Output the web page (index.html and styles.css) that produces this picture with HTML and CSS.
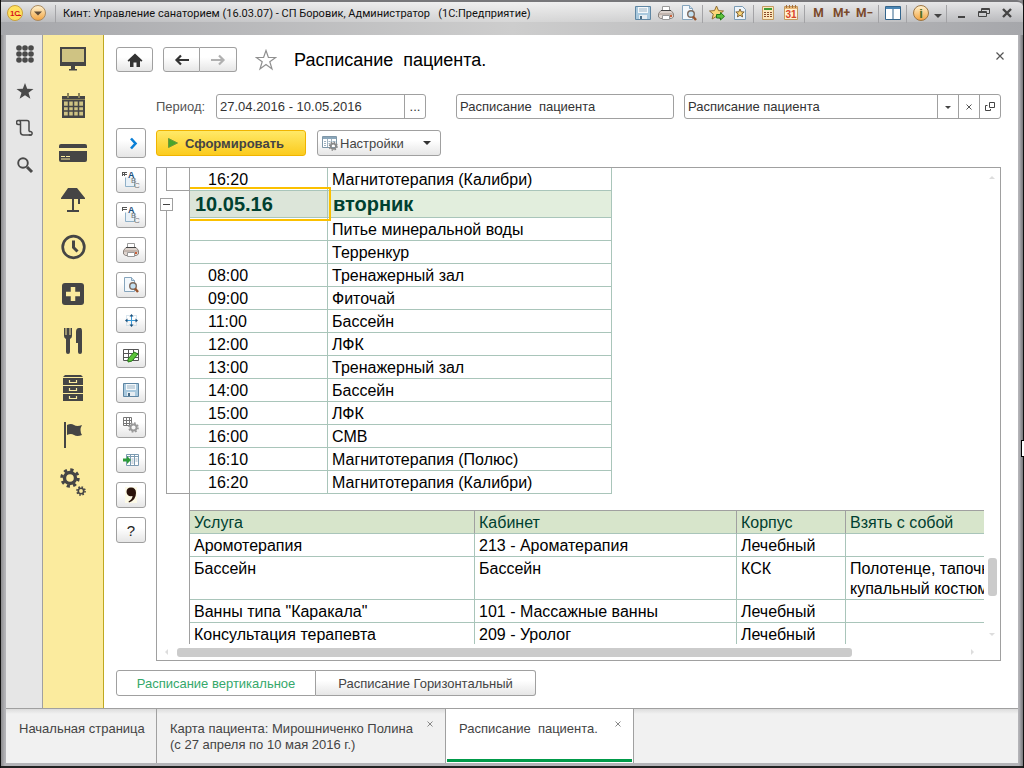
FILE: index.html
```html
<!DOCTYPE html>
<html lang="ru">
<head>
    <meta charset="UTF-8">
    <meta name="viewport" content="width=device-width, initial-scale=1.0">
    <title>Кинт: Управление санаторием</title>
    <link rel="stylesheet" href="styles.css">
</head>
<body>
    <!-- Общие значки -->
    <svg class="sprite" width="0" height="0" aria-hidden="true">
        <defs>
            <linearGradient id="orange" x1="0" y1="0" x2="0" y2="1">
                <stop offset="0" stop-color="#fff3d0"/>
                <stop offset="1" stop-color="#f2a340"/>
            </linearGradient>
            <symbol id="save" viewBox="0 0 16 16">
                <path d="M.5 1.5h15v13h-15z" fill="#a9c9de" stroke="#5f86a3"/>
                <path d="M3 2h10v6H3z" fill="#f4f8fb"/>
                <path d="M4 4h8M4 6h8" stroke="#9db4c4"/>
                <path d="M4 10h8v4H4z" fill="#e6edf2"/>
                <path d="M5 11h2v3H5z" fill="#4a6d86"/>
            </symbol>
            <symbol id="print" viewBox="0 0 16 16">
                <path d="M4.500 1.500h7v5h-7z" fill="#fff" stroke="#9a9a9a"/>
                <path d="M3 5.500h10l2.500 3v3.500l-2 1.500h-11l-2-1.500V8.500z" fill="#ddd3cd" stroke="#8b8480"/>
                <path d="M1 9h14" stroke="#a8988f"/>
                <path d="M4.500 10.500h7v4h-7z" fill="#fff" stroke="#999"/>
                <path d="M12 10h2v2h-2z" fill="#c9613a"/>
                <path d="M3 5.500h10" stroke="#444"/>
            </symbol>
            <symbol id="preview" viewBox="0 0 16 16">
                <path d="M1.500.500h7l3 3v11h-10z" fill="#f3f8fc" stroke="#86a5bd"/>
                <path d="M8.500.500v3h3" fill="#cfe0ec" stroke="#86a5bd"/>
                <circle cx="10" cy="9" r="3.300" fill="#c3e0f2" stroke="#7d6a5e" stroke-width="1.400"/>
                <path d="M12 11.500l3 3.500" stroke="#96532c" stroke-width="2.400"/>
            </symbol>
            <symbol id="gear" viewBox="0 0 20 20">
                <circle cx="10" cy="10" r="5.500" fill="none" stroke="currentColor" stroke-width="3.400"/>
                <circle cx="10" cy="10" r="8.200" fill="none" stroke="currentColor" stroke-width="3" stroke-dasharray="3.220 3.220"/>
            </symbol>
            <symbol id="abc" viewBox="0 0 18 18">
                <path d="M3.500 6.500v9h9v-8l-2-2" fill="#e8f1f8" stroke="#8fb0c8"/>
                <text x="6" y="7" class="abc-a">A</text>
                <text x="9" y="12" class="abc-b">B</text>
                <text x="12" y="17" class="abc-b">C</text>
            </symbol>
            <symbol id="tabgear" viewBox="0 0 16 16">
                <path d="M.500 1.500h14v11H.500z" fill="#fff" stroke="#7f97a8"/>
                <path d="M1 2h13v2H1z" fill="#8ba7bb"/>
                <path d="M5.500 4v8M9.500 4v8M2 6.500h2M2 8.500h2M2 10.500h2M6.500 6.500h2M6.500 8.500h2M10.500 6.500h3" stroke="#9fb2c0"/>
                <use href="#gear" x="6.500" y="6.500" width="9.500" height="9.500" color="#8a8a8a"/>
            </symbol>
        </defs>
    </svg>

    <div class="window">
        <!-- Заголовок окна -->
        <header class="titlebar">
            <svg class="orb" viewBox="0 0 16 16"><circle cx="8" cy="8" r="7.500" fill="#ffe05e" stroke="#c9a03c"/><text x="8" y="11" text-anchor="middle" class="logo">1С</text><path d="M9 10.500h5" stroke="#d8141c"/></svg>
            <button class="orb-btn" aria-label="Меню"><svg class="orb" viewBox="0 0 16 16"><circle cx="8" cy="8" r="7.500" fill="url(#orange)" stroke="#a98a62"/><path d="M4 6.500h8L8 10.500z" fill="#5c4a37"/></svg></button>
            <span class="sep"></span>
            <h1 class="app-title">Кинт: Управление санаторием (16.03.07) - СП Боровик, Администратор   (1С:Предприятие)</h1>
            <div class="title-tools">
                <button aria-label="Сохранить"><svg class="i16"><use href="#save"/></svg></button>
                <button aria-label="Печать"><svg class="i16"><use href="#print"/></svg></button>
                <button aria-label="Просмотр"><svg class="i16"><use href="#preview"/></svg></button>
                <span class="sep"></span>
                <button aria-label="В избранное"><svg class="i16" viewBox="0 0 16 16"><path d="M7.500 1l2 4.600 5 .4-3.800 3.200 1.200 4.800-4.400-2.600L3.100 14l1.200-4.800L.500 6l5-.4z" fill="#fbd678" stroke="#8f6d35"/><path d="M7.500 9.500h4v-2l4 3.800-4 3.700v-2h-4z" fill="#5cc23c" stroke="#247a18"/></svg></button>
                <button aria-label="Избранное"><svg class="i16" viewBox="0 0 16 16"><path d="M2.500 1.500h8l3 3v10h-11z" fill="#edf4fa" stroke="#7b9cb5"/><path d="M8 4l1.200 2.800 3 .2-2.300 2 .7 2.900L8 10.300l-2.600 1.600.7-2.900-2.300-2 3-.2z" fill="#fbd678" stroke="#7d6135"/></svg></button>
                <span class="sep"></span>
                <button aria-label="Калькулятор"><svg class="i16" viewBox="0 0 16 16"><path d="M2.500 1.500h11v13h-11z" fill="#fbe8bd" stroke="#c39a62"/><path d="M4 3h8v2H4z" fill="#3f9c35"/><path d="M4 7.500h8M4 9.500h8M4 11.500h8" stroke="#8a4a2c" stroke-dasharray="2 1"/></svg></button>
                <button aria-label="Календарь"><svg class="i16" viewBox="0 0 16 16"><path d="M1.500 1.500h13v13h-13z" fill="#fff3d2" stroke="#c39a62"/><path d="M2 2h12v2H2z" fill="#e9b877"/><path d="M3.500 0v3M6.500 0v3M9.500 0v3M12.500 0v3" stroke="#a36f3c"/><text x="8" y="13" text-anchor="middle" class="cal-num">31</text></svg></button>
                <span class="sep"></span>
                <button class="mem">M</button>
                <button class="mem">M+</button>
                <button class="mem">M−</button>
                <span class="sep"></span>
                <button aria-label="Панели"><svg class="i16" viewBox="0 0 16 16"><path d="M.500 1.500h15v13H.500z" fill="#fff" stroke="#33658c"/><path d="M1 2h14v2H1z" fill="#4a86b5"/><path d="M8 4v10" stroke="#33658c"/></svg></button>
                <span class="sep"></span>
                <button aria-label="Справка"><svg class="i16" viewBox="0 0 16 16"><circle cx="8" cy="8" r="7.500" fill="url(#orange)" stroke="#9c7644"/><text x="8" y="13" text-anchor="middle" class="info">i</text></svg></button>
                <button class="narrow" aria-label="Ещё"><svg class="i16" viewBox="0 0 16 16"><path d="M4 9h8l-4 4z" fill="#444"/></svg></button>
                <span class="sep"></span>
                <button aria-label="Свернуть"><svg class="i16" viewBox="0 0 16 16"><path d="M5 12h7" stroke="#444" stroke-width="2"/></svg></button>
                <button aria-label="Восстановить"><svg class="i16" viewBox="0 0 16 16"><path d="M5.500 6V3.500h8v5H11M2.500 6.500h8v5h-8zM5 4.500h8M3 7.500h7" fill="none" stroke="#444"/></svg></button>
                <button aria-label="Закрыть"><svg class="i16" viewBox="0 0 16 16"><path d="M4 4l8 8M12 4l-8 8" stroke="#444" stroke-width="2.400"/></svg></button>
            </div>
        </header>

        <div class="workspace">
            <!-- Узкая панель -->
            <nav class="rail">
                <button aria-label="Меню функций"><svg class="i18" viewBox="0 0 18 18" fill="#4a4a4a"><circle cx="3" cy="3" r="2.800"/><circle cx="9" cy="3" r="2.800"/><circle cx="15" cy="3" r="2.800"/><circle cx="3" cy="9" r="2.800"/><circle cx="9" cy="9" r="2.800"/><circle cx="15" cy="9" r="2.800"/><circle cx="3" cy="15" r="2.800"/><circle cx="9" cy="15" r="2.800"/><circle cx="15" cy="15" r="2.800"/></svg></button>
                <button aria-label="Избранное"><svg class="i18" viewBox="0 0 18 18"><path d="M9 1l2.200 5.800 6.300.2-5 3.800 1.900 6L9 13.300l-5.400 3.500 1.900-6L.500 7l6.300-.2z" fill="#4a4a4a"/></svg></button>
                <button aria-label="История"><svg class="i18" viewBox="0 0 18 18" fill="none" stroke="#4a4a4a" stroke-width="1.500"><path d="M4 5.500H2.500a2 2 0 1 1 2-2V13q0 3 3 3h8M3 1.500h8q2 0 2 2v9"/><path d="M13 12.500h1.500a1.800 1.800 0 1 1-1.500 3"/></svg></button>
                <button aria-label="Поиск"><svg class="i18" viewBox="0 0 18 18" fill="none" stroke="#4a4a4a"><circle cx="7" cy="7" r="4.800" stroke-width="1.900"/><path d="M11 11l5 5" stroke-width="3"/></svg></button>
            </nav>

            <!-- Панель разделов -->
            <nav class="sections">
                <button aria-label="Рабочий стол"><svg class="i28" viewBox="0 0 28 28"><path d="M2 3h24v17H2z" fill="#cfc383" stroke="#454545" stroke-width="2"/><path d="M1 17h26v4H1zM12 21h4v3h-4zM10 24h8v1.500h-8z" fill="#454545"/></svg></button>
                <button aria-label="Календарь"><svg class="i28" viewBox="0 0 28 28"><path d="M3 4h23v22H3z" fill="#454545"/><path d="M5 9.500h19v14H5z" fill="#cfc383"/><path d="M3 7.500h23" stroke="#8b845c"/><path d="M5 14.500h19M5 19h19M9.500 9v15M14.500 9v15M19.500 9v15" stroke="#454545" stroke-width="1.500"/><path d="M9 1v5M20 1v5" stroke="#8b845c" stroke-width="2"/></svg></button>
                <button aria-label="Оплата"><svg class="i28" viewBox="0 0 28 28"><path d="M2 5h24q2 0 2 2v2H0V7q0-2 2-2zM0 12h28v9q0 2-2 2H2q-2 0-2-2z" fill="#454545"/><path d="M2 17.500h4M7 17.500h4M2 20h9" stroke="#fbeb9e"/></svg></button>
                <button aria-label="Номерной фонд"><svg class="i28" viewBox="0 0 28 28"><path d="M9 2h9l8 10v1H2v-1zM13 13h2v11h5v2H8v-2h5zM19 13h2v5h-2z" fill="#454545"/></svg></button>
                <button aria-label="Время"><svg class="i28" viewBox="0 0 28 28" fill="none" stroke="#454545"><circle cx="14.500" cy="14" r="10.800" stroke-width="2.700"/><path d="M14.500 7.500v7l4 4" stroke-width="3"/></svg></button>
                <button aria-label="Медицина"><svg class="i28" viewBox="0 0 28 28"><rect x="3" y="3" width="22" height="22" rx="3" fill="#454545"/><path d="M14 7v14M7 14h14" stroke="#fbeb9e" stroke-width="4.500"/></svg></button>
                <button aria-label="Питание"><svg class="i28" viewBox="0 0 28 28"><path d="M5 1v8q0 2 2 3v13q0 2 2 2t2-2V12q2-1 2-3V1h-1.500v7h-1V1h-3v7h-1V1zM20 1h2q1 1 1 3v21q0 2-2 2t-2-2v-9h-2V5q0-4 3-4z" fill="#454545"/></svg></button>
                <button aria-label="Архив"><svg class="i28" viewBox="0 0 28 28"><path d="M6 1h16l2 2H4zM4 4h20v7H4zM4 12h20v7H4zM4 20h20v7H4z" fill="#454545"/><path d="M10.500 6v2.500h7V6M10.500 14v2.500h7V14M10.500 22v2.500h7V22" fill="none" stroke="#fbeb9e" stroke-width="1.200"/></svg></button>
                <button aria-label="Отчёты"><svg class="i28" viewBox="0 0 28 28"><path d="M5 1h2v26H5zM8 4q4-2 7 0t8 0q-3 5 0 10-5 2-8 0t-7 0z" fill="#454545"/></svg></button>
                <button aria-label="Настройки"><svg class="i28" viewBox="0 0 28 28" color="#454545"><use href="#gear" x="1" y="0" width="20" height="20"/><use href="#gear" x="17" y="18" width="10" height="10"/></svg></button>
            </nav>

            <main class="main">
                <div class="page-head">
                    <button class="btn home" aria-label="Домой"><svg class="i16" viewBox="0 0 16 16"><path d="M8 1.500l7.500 7-1.300 1.300L13 8.800V15H9.500v-4.500h-3V15H3V8.800L1.800 9.800.500 8.500z" fill="#333"/></svg></button>
                    <div class="pair">
                        <button class="btn" aria-label="Назад"><svg class="i16" viewBox="0 0 16 16"><path d="M15 8H3M7 3.500L2.500 8 7 12.500" fill="none" stroke="#333" stroke-width="2.200"/></svg></button>
                        <button class="btn" aria-label="Вперёд"><svg class="i16" viewBox="0 0 16 16"><path d="M1 8h12M9 3.500L13.500 8 9 12.500" fill="none" stroke="#b0b0b0" stroke-width="2.200"/></svg></button>
                    </div>
                    <button class="fav" aria-label="Добавить в избранное"><svg viewBox="0 0 22 22"><path d="M11 1.500l2.400 7h7.300l-5.900 4.300 2.200 7.200-6-4.400L5 20l2.200-7.200-5.900-4.300h7.300z" fill="#fff" stroke="#909090" stroke-width="1.200"/></svg></button>
                    <h2 class="page-title">Расписание  пациента.</h2>
                    <button class="page-close" aria-label="Закрыть страницу"><svg viewBox="0 0 8 8"><path d="M.500.500l7 7M7.500.500l-7 7" stroke="#555" stroke-width="1.200"/></svg></button>
                </div>

                <div class="filters">
                    <label for="period">Период:</label>
                    <div class="field field-period">
                        <input id="period" type="text" value="27.04.2016 - 10.05.2016">
                        <button>...</button>
                    </div>
                    <div class="field field-name">
                        <input type="text" aria-label="Название отчёта" value="Расписание  пациента">
                    </div>
                    <div class="field field-variant">
                        <input type="text" aria-label="Вариант" value="Расписание пациента">
                        <button aria-label="Выбрать"><svg class="i16" viewBox="0 0 16 16"><path d="M5 7h6l-3 3z" fill="#444"/></svg></button>
                        <button aria-label="Очистить"><svg class="i16" viewBox="0 0 16 16"><path d="M5.500 5.500l5 5M10.500 5.500l-5 5" stroke="#555"/></svg></button>
                        <button aria-label="Открыть"><svg class="i16" viewBox="0 0 16 16"><path d="M7.500 3.500h5v5h-5zM5.500 6.500h-2v5h5v-1.500" fill="none" stroke="#444"/></svg></button>
                    </div>
                </div>

                <div class="actions">
                    <button class="btn expand" aria-label="Показать отборы"><svg class="i16" viewBox="0 0 16 16"><path d="M8 3.500l4.500 5L8 13.500" fill="none" stroke="#0a7fd6" stroke-width="2.600"/></svg></button>
                    <button class="btn run"><svg viewBox="0 0 10 10"><path d="M.500.500l9 4.500-9 4.500z" fill="#4aa52a" stroke="#6f9a38"/></svg>Сформировать</button>
                    <button class="btn setup"><svg class="i16"><use href="#tabgear"/></svg>Настройки<span class="caret"></span></button>
                </div>

                <div class="report">
                    <div class="tools">
                        <button class="btn" aria-label="Развернуть группы"><svg class="i18" viewBox="0 0 18 18"><use href="#abc"/><path d="M0 1.500h5M0 3.500h5M.500 1v4M2.500 1v4" stroke="#555"/></svg></button>
                        <button class="btn" aria-label="Свернуть группы"><svg class="i18" viewBox="0 0 18 18"><use href="#abc"/><path d="M0 1.500h5M0 3.500h5M.500 1v4" stroke="#555"/></svg></button>
                        <button class="btn" aria-label="Печать"><svg class="i16"><use href="#print"/></svg></button>
                        <button class="btn" aria-label="Предварительный просмотр"><svg class="i16"><use href="#preview"/></svg></button>
                        <button class="btn" aria-label="Масштаб"><svg class="i16" viewBox="0 0 16 16"><path d="M3.500 3.500h10v10h-10z" fill="none" stroke="#b5cede" stroke-dasharray="1 1"/><path d="M8.500 3v11M3 8.500h11" stroke="#3b9ad6"/><path d="M8.500 2l2 2.500h-4zM8.500 15l2-2.500h-4zM2 8.500L4.500 6.500v4zM15 8.500l-2.500-2v4z" fill="#1b4f7a"/></svg></button>
                        <button class="btn" aria-label="Редактировать"><svg class="i16" viewBox="0 0 16 16"><path d="M.500 2.500h15v11H.500zM.500 6.500h15M.500 10.500h15M5.500 2.500v11M10.500 2.500v11" fill="#fff" stroke="#555"/><path d="M5 12l6-7 4 2-6 7-4 1z" fill="#5cc63a" stroke="#27791b"/></svg></button>
                        <button class="btn" aria-label="Сохранить"><svg class="i16"><use href="#save"/></svg></button>
                        <button class="btn" aria-label="Параметры"><svg class="i16" viewBox="0 0 16 16"><path d="M.500.500h8v8h-8zM3.500.500v8M6.500.500v8M.500 3.500h8M.500 6.500h8" fill="#fff" stroke="#777"/><use href="#gear" x="5" y="5" width="11" height="11" color="#999"/></svg></button>
                        <button class="btn" aria-label="Выгрузить"><svg class="i16" viewBox="0 0 16 16"><path d="M3.500 2.500h12v11h-12zM7.500 2.500v11M11.500 2.500v11M4 4.500h11" fill="#fff" stroke="#7c9bb2"/><path d="M8.500 7h2M8.500 9h2M8.500 11h2M12.500 7h2M12.500 9h2" stroke="#9fb2c0"/><path d="M0 6.500h4V4l4 4-4 4V9.500H0z" fill="#2d9b3a"/></svg></button>
                        <button class="btn" aria-label="Запятая"><svg class="i16" viewBox="0 0 16 16"><path d="M2 0h12v16H2z" fill="#fdfae6"/><path d="M8 .500q5 0 5 5.500 0 7-7 9.500l-.500-1Q9.500 12 9.500 9 4 10 3.500 5 3.500.500 8 .500z" fill="#2a130b"/></svg></button>
                        <button class="btn help">?</button>
                    </div>

                    <!-- Табличный документ -->
                    <div class="sheet">
                        <div class="view">
                            <div class="outline">
                                <div class="branch branch-top"></div>
                                <div class="node"><button aria-label="Свернуть день"></button></div>
                                <div class="branch branch-day"></div>
                            </div>
                            <div class="doc">
                                <table class="plan">
                                    <tr><td class="time">16:20</td><td>Магнитотерапия (Калибри)</td></tr>
                                    <tr class="day"><th class="selected">10.05.16</th><th>вторник</th></tr>
                                    <tr><td></td><td>Питье минеральной воды</td></tr>
                                    <tr><td></td><td>Терренкур</td></tr>
                                    <tr><td class="time">08:00</td><td>Тренажерный зал</td></tr>
                                    <tr><td class="time">09:00</td><td>Фиточай</td></tr>
                                    <tr><td class="time">11:00</td><td>Бассейн</td></tr>
                                    <tr><td class="time">12:00</td><td>ЛФК</td></tr>
                                    <tr><td class="time">13:00</td><td>Тренажерный зал</td></tr>
                                    <tr><td class="time">14:00</td><td>Бассейн</td></tr>
                                    <tr><td class="time">15:00</td><td>ЛФК</td></tr>
                                    <tr><td class="time">16:00</td><td>СМВ</td></tr>
                                    <tr><td class="time">16:10</td><td>Магнитотерапия (Полюс)</td></tr>
                                    <tr><td class="time">16:20</td><td>Магнитотерапия (Калибри)</td></tr>
                                </table>
                                <table class="services">
                                    <tr><th class="c-service">Услуга</th><th class="c-room">Кабинет</th><th class="c-house">Корпус</th><th class="c-take">Взять с собой</th></tr>
                                    <tr><td>Аромотерапия</td><td>213 - Ароматерапия</td><td>Лечебный</td><td></td></tr>
                                    <tr><td>Бассейн</td><td>Бассейн</td><td>КСК</td><td class="two-lines">Полотенце, тапочки,<br>купальный костюм</td></tr>
                                    <tr><td>Ванны типа "Каракала"</td><td>101 - Массажные ванны</td><td>Лечебный</td><td></td></tr>
                                    <tr><td>Консультация терапевта</td><td>209 - Уролог</td><td>Лечебный</td><td></td></tr>
                                </table>
                            </div>
                        </div>
                        <div class="vscroll"><i class="arrow up"></i><div class="vthumb"></div><i class="arrow down"></i></div>
                        <div class="hscroll"><i class="arrow left"></i><div class="htrack"><div class="hthumb"></div></div><i class="arrow right"></i></div>
                    </div>
                </div>

                <div class="switch">
                    <button class="btn active">Расписание вертикальное</button>
                    <button class="btn">Расписание Горизонтальный</button>
                </div>
            </main>
        </div>

        <!-- Открытые окна -->
        <footer class="tabs">
            <div class="tab tab-start"><a href="#">Начальная страница</a></div>
            <div class="tab tab-card">
                <a href="#">Карта пациента: Мирошниченко Полина<br>(с 27 апреля по 10 мая 2016 г.)</a>
                <button aria-label="Закрыть"><svg viewBox="0 0 6 6"><path d="M.500.500l5 5M5.500.500l-5 5" stroke="#888"/></svg></button>
            </div>
            <div class="tab tab-plan current">
                <a href="#">Расписание  пациента.</a>
                <button aria-label="Закрыть"><svg viewBox="0 0 6 6"><path d="M.500.500l5 5M5.500.500l-5 5" stroke="#888"/></svg></button>
            </div>
        </footer>
    </div>
    <div class="cursor"></div>
</body>
</html>
```
FILE: styles.css
```css
* {
    box-sizing: border-box;
}

body {
    margin: 0;
    background: #111;
    font-family: "Liberation Sans", Arial, sans-serif;
    font-size: 13px;
    color: #333;
    overflow: hidden;
}

button {
    margin: 0;
    padding: 0;
    border: 0;
    background: none;
    font: inherit;
    color: inherit;
    display: flex;
    align-items: center;
    justify-content: center;
}

svg {
    display: block;
    flex: none;
}

.sprite {
    position: absolute;
}

.i16 {
    width: 16px;
    height: 16px;
}

.i18 {
    width: 18px;
    height: 18px;
}

.i28 {
    width: 28px;
    height: 28px;
}

/* Окно */
.window {
    display: flex;
    flex-direction: column;
    height: 100vh;
    margin: 0 1px;
    padding: 0 5px;
    border-bottom: 2px solid #222;
    background: linear-gradient(90deg, #8d8d8f, #b4b4b8 4px, #b4b4b8 calc(100% - 4px), #77777a);
}

.titlebar {
    display: flex;
    align-items: flex-start;
    flex: none;
    height: 35px;
    margin: 0 -5px;
    padding: 3px 5px 0 6px;
    border-top: 2px solid #77777a;
    border-radius: 0 6px 0 0;
    background:
        linear-gradient(rgba(255, 255, 255, 0.7), rgba(255, 255, 255, 0.2)) top / 100% 20px no-repeat,
        linear-gradient(90deg, #a6a7ab, #cdcdcd 50%, #a6a7ab);
}

.orb {
    width: 16px;
    height: 16px;
}

.orb-btn {
    margin: 0 7px;
}

.logo {
    font-size: 8px;
    font-weight: bold;
    fill: #d8141c;
}

.sep {
    width: 1px;
    height: 18px;
    margin: 0 2px;
    background: #a3a3a6;
}

.app-title {
    flex: 1;
    margin: 0 0 0 5px;
    font-family: Roboto, sans-serif;
    font-size: 11px;
    font-weight: normal;
    line-height: 17px;
    white-space: pre;
    color: #111;
}

.title-tools {
    display: flex;
}

.title-tools button {
    width: 23px;
    height: 16px;
}

.title-tools .narrow {
    width: 12px;
}

.title-tools .mem {
    font-family: Roboto, sans-serif;
    font-size: 12px;
    font-weight: bold;
    color: #7b4a2b;
}

.cal-num {
    font-size: 10px;
    font-weight: bold;
    fill: #d8442b;
}

.info {
    font-size: 13px;
    font-weight: bold;
    fill: #4d6b1e;
}

.abc-a {
    font-size: 9px;
    font-weight: bold;
    fill: #1c4f7c;
}

.abc-b {
    font-size: 8px;
    fill: #777;
}

.workspace {
    display: flex;
    flex: 1;
    min-height: 0;
}

/* Боковые панели */
.rail {
    width: 37px;
    flex: none;
    border-right: 1px solid #a0a0a0;
    background: #e6e6e6;
}

.rail button {
    width: 37px;
    height: 37px;
}

.sections {
    width: 61px;
    flex: none;
    border-right: 1px solid #bfa820;
    background: #fbeb9e;
}

.sections button {
    width: 60px;
    height: 47px;
}

/* Страница */
.main {
    display: flex;
    flex-direction: column;
    flex: 1;
    min-width: 0;
    padding: 12px 17px 12px 12px;
    background: #fff;
}

.btn {
    height: 26px;
    border: 1px solid #a0a0a0;
    border-radius: 3px;
    background: linear-gradient(#fff, #fff 40%, #e6e6e6);
    color: #444;
}

.page-head {
    display: flex;
    align-items: center;
    height: 25px;
}

.page-head .btn {
    width: 37px;
    height: 25px;
}

.pair {
    display: flex;
    margin: 0 18px 0 10px;
}

.pair .btn:first-child {
    border-radius: 3px 0 0 3px;
}

.pair .btn:last-child {
    border-left: 0;
    border-radius: 0 3px 3px 0;
}

.fav,
.fav svg {
    width: 22px;
    height: 22px;
}

.page-title {
    flex: 1;
    margin: 0 0 0 17px;
    font-size: 18px;
    font-weight: normal;
    line-height: 26px;
    white-space: pre;
    color: #000;
}

.page-close svg {
    width: 8px;
    height: 8px;
}

.page-close {
    width: 8px;
    align-self: flex-start;
    margin: 5px -3px 0 0;
}

.filters {
    display: flex;
    align-items: center;
    margin: 22px 0 9px;
    padding-left: 40px;
}

.filters label {
    width: 60px;
    flex: none;
    color: #555;
}

.field {
    display: flex;
    height: 25px;
    border: 1px solid #a0a0a0;
    border-radius: 3px;
    background: #fff;
}

.field input {
    flex: 1;
    min-width: 0;
    padding: 0 3px;
    border: 0;
    background: none;
    font: inherit;
    color: #333;
}

.field button {
    width: 21px;
    border-left: 1px solid #a0a0a0;
}

.field-period {
    width: 210px;
    margin-right: 30px;
}

.field-name {
    width: 218px;
    margin-right: 10px;
}

.field-variant {
    flex: 1;
}

.actions {
    display: flex;
    align-items: center;
    margin-bottom: 9px;
}

.expand {
    width: 30px;
    height: 30px;
    margin-right: 10px;
}

.run {
    width: 150px;
    margin-right: 11px;
    padding-right: 10px;
    gap: 7px;
    border-color: #f0b400;
    background: linear-gradient(#ffe968, #fbcb1e);
    font-weight: bold;
}

.run svg {
    width: 10px;
    height: 10px;
}

.setup {
    width: 124px;
    padding: 0 9px 0 4px;
    gap: 2px;
    justify-content: flex-start;
}

.caret {
    margin-left: auto;
    border: 4px solid transparent;
    border-top-color: #333;
    border-bottom: 0;
}

.report {
    display: flex;
    flex: 1;
    min-height: 0;
    gap: 10px;
}

.tools {
    display: flex;
    flex-direction: column;
    gap: 9px;
    width: 30px;
}

.help {
    font-size: 15px;
    color: #222;
}

/* Табличный документ */
.sheet {
    display: grid;
    grid-template-columns: minmax(0, 1fr) 16px;
    grid-template-rows: minmax(0, 1fr) 16px;
    flex: 1;
    min-width: 0;
    border: 1px solid #a0a0a0;
}

.view {
    display: flex;
    min-width: 0;
    overflow: hidden;
}

.outline {
    width: 32px;
    flex: none;
}

.branch {
    margin-left: 9px;
    border-left: 1px solid #a0a0a0;
    border-bottom: 1px solid #a0a0a0;
}

.branch-top {
    height: 23px;
}

.branch-day {
    height: 283px;
}

.node {
    height: 20px;
    padding: 7px 0 0 3px;
}

.node button {
    width: 13px;
    height: 13px;
    border: 1px solid #a0a0a0;
    background: linear-gradient(#444, #444) center / 7px 1px no-repeat #fff;
}

.doc {
    flex: 1;
    min-width: 0;
    overflow: hidden;
    border-left: 1px solid #a0a0a0;
}

.doc table {
    border-spacing: 0;
    table-layout: fixed;
    font-size: 16px;
    line-height: 20px;
    color: #000;
}

.doc td,
.doc th {
    height: 23px;
    padding: 2px 4px 0;
    border-right: 1px solid #a9c5ba;
    border-bottom: 1px solid #a9c5ba;
    text-align: left;
    vertical-align: top;
    white-space: nowrap;
}

.plan {
    width: 422px;
}

.plan td:first-child {
    width: 138px;
}

.plan td.time {
    padding-left: 18px;
}

.plan .day th {
    height: 27px;
    padding: 1px 5px;
    background: #e2eedd;
    font-size: 20px;
    line-height: 24px;
    color: #004030;
}

.plan .day .selected {
    position: relative;
    background: #dce5d9;
}

/* Рамка текущей ячейки */
.plan .selected::after {
    content: "";
    position: absolute;
    inset: -4px -4px -4px -2px;
    border: 2px solid #fbc000;
}

.services {
    width: 858px;
    margin-top: 16px;
}

.services th {
    height: 24px;
    border-top: 1px solid #a0a0a0;
    border-right-color: #a0a0a0;
    background: #d7e5cb;
    font-weight: normal;
    color: #004030;
}

.services .c-service {
    width: 285px;
}

.services .c-room {
    width: 262px;
}

.services .c-house {
    width: 109px;
}

.services td.two-lines {
    height: 43px;
}

/* Полосы прокрутки */
.vscroll {
    display: flex;
    flex-direction: column;
    align-items: center;
    padding: 8px 0;
}

.vthumb {
    width: 9px;
    height: 38px;
    margin-top: 379px;
    border-radius: 3px;
    background: #cbcbcb;
}

.hscroll {
    display: flex;
    align-items: center;
    padding: 0 10px 0 8px;
}

.htrack {
    flex: 1;
    padding: 0 9px;
}

.hthumb {
    width: 86%;
    height: 9px;
    border-radius: 3px;
    background: #cbcbcb;
}

.arrow {
    border: 3px solid transparent;
}

.up {
    border-top: 0;
    border-bottom-color: #ddd;
}

.down {
    margin-top: auto;
    border-bottom: 0;
    border-top-color: #ddd;
}

.left {
    border-left: 0;
    border-right-color: #ddd;
}

.right {
    border-right: 0;
    border-left-color: #ddd;
}

.switch {
    display: flex;
    margin-top: 9px;
}

.switch .btn {
    width: 220px;
    border-left: 0;
    border-radius: 0 3px 3px 0;
}

.switch .active {
    width: 200px;
    border-left: 1px solid #a0a0a0;
    border-radius: 3px 0 0 3px;
    background: #fff;
    color: #35a86b;
}

/* Вкладки окон */
.tabs {
    display: flex;
    flex: none;
    height: 55px;
    margin-bottom: 3px;
    border-top: 1px solid #a0a0a0;
    background: linear-gradient(#dcdcdc, #f1f1f1 5px);
}

.tab {
    display: flex;
    justify-content: space-between;
    align-items: flex-start;
    padding: 12px 12px 0 13px;
    border-right: 1px solid #a0a0a0;
    line-height: 16px;
}

.tab a {
    color: #444;
    text-decoration: none;
    white-space: pre;
}

.tab svg {
    width: 6px;
    height: 6px;
}

.tab-start {
    width: 151px;
}

.tab-card {
    width: 289px;
}

.tab-plan {
    width: 188px;
}

.current {
    background: linear-gradient(#009a49, #009a49) center bottom 1px / calc(100% - 2px) 3px no-repeat #fff;
}

/* Указатель мыши у края экрана */
.cursor {
    position: absolute;
    right: 0;
    top: 440px;
    width: 3px;
    height: 17px;
    border: 1px solid #000;
    border-right: 0;
    background: #fff;
}
```
